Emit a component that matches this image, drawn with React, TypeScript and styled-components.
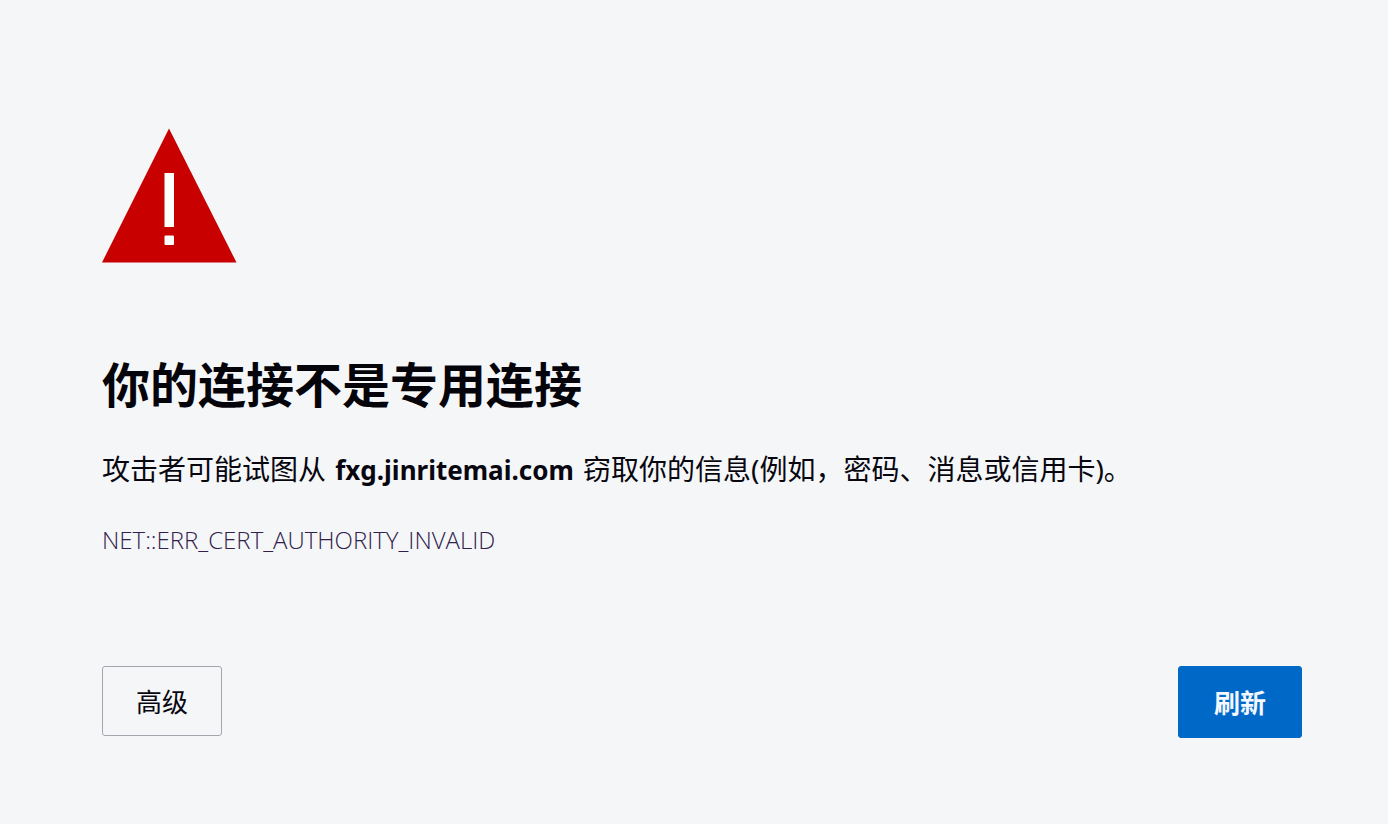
import React from "react";
import styled, { createGlobalStyle } from "styled-components";

const GlobalStyle = createGlobalStyle`
  *, *::before, *::after { box-sizing: border-box; }
  body {
    margin: 0;
    background: #f4f6f8;
    color: #08060f;
    font-family: "Noto Sans", "Noto Sans CJK SC", sans-serif;
  }
`;

const Page = styled.main`
  padding: 128px 86px 86px 102px;
`;

const WarningIcon = styled.svg`
  display: block;
  width: 135px;
  height: 135px;
`;

const Title = styled.h1`
  margin: 86px 0 0;
  font-size: 48px;
  line-height: 72px;
  font-weight: 700;
  color: #05040a;
`;

const Message = styled.p`
  margin: 28px 0 0;
  font-size: 28px;
  line-height: 40px;
`;

const Host = styled.strong`
  margin: 0 2px;
  font-size: 26px;
  font-weight: 700;
`;

const ErrorCode = styled.p`
  margin: 34px 0 0;
  font-family: "Open Sans", sans-serif;
  font-size: 24px;
  line-height: 32px;
  font-weight: 300;
  color: #30204a;
`;

const Actions = styled.div`
  display: flex;
  justify-content: space-between;
  align-items: flex-start;
  margin-top: 110px;
`;

const Button = styled.button<{ $primary?: boolean }>`
  width: ${(p) => (p.$primary ? 124 : 120)}px;
  height: ${(p) => (p.$primary ? 72 : 70)}px;
  padding: 0;
  border: 1px solid ${(p) => (p.$primary ? "#0069c8" : "#a4a6ae")};
  border-radius: 3px;
  background: ${(p) => (p.$primary ? "#0069c8" : "transparent")};
  color: ${(p) => (p.$primary ? "#f4f8ff" : "#08060f")};
  font-family: inherit;
  font-size: 26px;
  font-weight: ${(p) => (p.$primary ? 700 : 400)};
  cursor: pointer;
`;

export default function App() {
  return (
    <>
      <GlobalStyle />
      <Page>
        <WarningIcon viewBox="0 0 135 135" aria-hidden="true">
          <path d="M67 0.5 134.5 134.5H0Z" fill="#c80000" />
          <path d="M62.5 45h9.5v54h-9.5Z" fill="#fff" />
          <rect x="62.5" y="107.5" width="9.5" height="9.5" rx="1" fill="#fff" />
        </WarningIcon>
        <Title>你的连接不是专用连接</Title>
        <Message>
          攻击者可能试图从 <Host>fxg.jinritemai.com</Host> 窃取你的信息(例如，密码、消息或信用卡)。
        </Message>
        <ErrorCode>NET::ERR_CERT_AUTHORITY_INVALID</ErrorCode>
        <Actions>
          <Button type="button">高级</Button>
          <Button type="button" $primary>刷新</Button>
        </Actions>
      </Page>
    </>
  );
}
